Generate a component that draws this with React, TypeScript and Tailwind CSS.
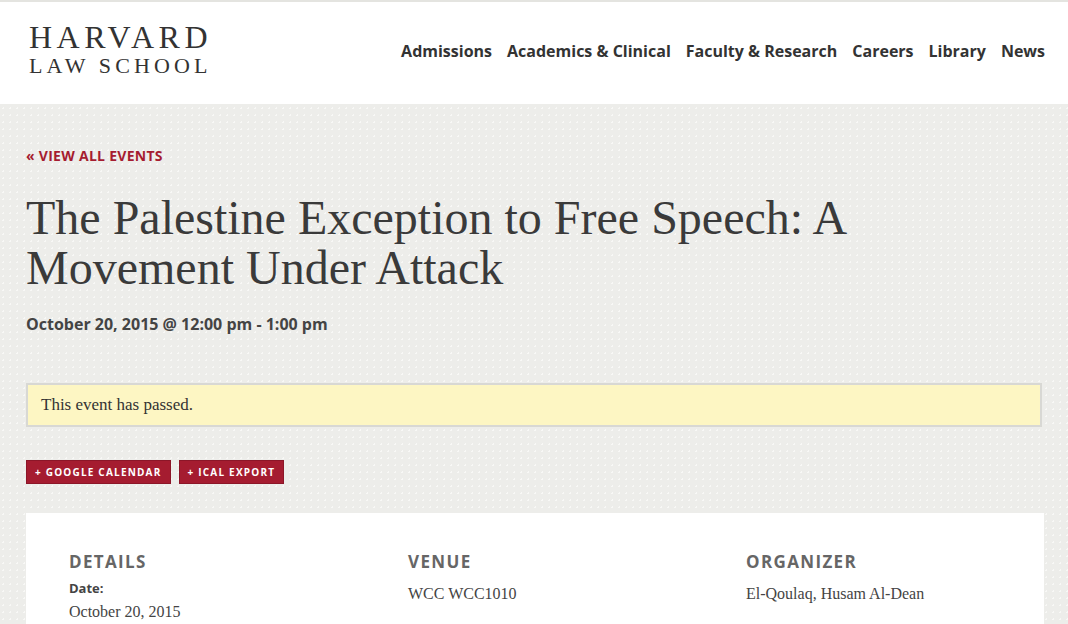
const serif = "font-['Liberation_Serif',serif]";
const sans = "font-['Open_Sans',sans-serif]";

const nav = ["Admissions", "Academics & Clinical", "Faculty & Research", "Careers", "Library", "News"];

function Header() {
  return (
    <header className="bg-white border-t-2 border-[#e4e4e0] h-[104px] flex items-center justify-between pl-[29px] pr-[23px]">
      <div className={`${serif} text-[#333] -mt-[9px]`}>
        <div className="text-[32px] leading-[33px] tracking-[4.5px]">HARVARD</div>
        <div className="text-[22px] leading-[23px] tracking-[4.1px]">LAW SCHOOL</div>
      </div>
      <nav className={`${sans} flex gap-[15px] text-[16px] font-bold text-[#333] -mt-[4px]`}>
        {nav.map((n) => (
          <a key={n}>{n}</a>
        ))}
      </nav>
    </header>
  );
}

function Column({ title, children }: { title: string; children: React.ReactNode }) {
  return (
    <div>
      <h3 className={`${sans} text-[17px] font-bold tracking-[0.08em] text-[#666] leading-none`}>{title}</h3>
      <div className="mt-[12px]">{children}</div>
    </div>
  );
}

export default function App() {
  return (
    <div className="min-h-[624px] bg-[#ededea] bg-[radial-gradient(#f8f8f6_1px,transparent_1px)] bg-[size:7px_7px] overflow-hidden">
      <Header />
      <main className="px-[26px] pt-[45px]">
        <a className={`${sans} text-[#a51c30] font-bold text-[14px] tracking-[0.02em] uppercase leading-none block`}>
          « View All Events
        </a>
        <h1 className={`${serif} text-[#3a3a3a] text-[48px] leading-[50px] mt-[30px]`}>
          The Palestine Exception to Free Speech: A
          <br />
          Movement Under Attack
        </h1>
        <p className={`${sans} text-[#444] font-bold text-[16px] mt-[23px] leading-none`}>
          October 20, 2015 @ 12:00 pm - 1:00 pm
        </p>
        <div className="mt-[51px] h-[44px] bg-[#fdf6c3] border-2 border-[#d8d8d4] flex items-center pl-[13px]">
          <span className={`${serif} text-[17px] text-[#333]`}>This event has passed.</span>
        </div>
        <div className="flex gap-[8px] mt-[33px]">
          {["+ Google Calendar", "+ iCal Export"].map((b) => (
            <a
              key={b}
              className={`${sans} bg-[#a51c30] text-white uppercase font-bold text-[10px] tracking-[0.12em] h-[24px] px-[8px] flex items-center border border-[#8c1628]`}
            >
              {b}
            </a>
          ))}
        </div>
        <section className="bg-white mt-[29px] w-[1018px] h-[200px] grid grid-cols-[339px_338px_1fr] pl-[43px] pt-[40px]">
          <Column title="DETAILS">
            <div className={`${sans} font-bold text-[13px] text-[#444] leading-none`}>Date:</div>
            <div className={`${serif} text-[16px] text-[#444] mt-[5px]`}>October 20, 2015</div>
          </Column>
          <Column title="VENUE">
            <div className={`${serif} text-[16px] text-[#444] mt-[6px]`}>WCC WCC1010</div>
          </Column>
          <Column title="ORGANIZER">
            <div className={`${serif} text-[16px] text-[#444] mt-[6px]`}>El-Qoulaq, Husam Al-Dean</div>
          </Column>
        </section>
      </main>
    </div>
  );
}
